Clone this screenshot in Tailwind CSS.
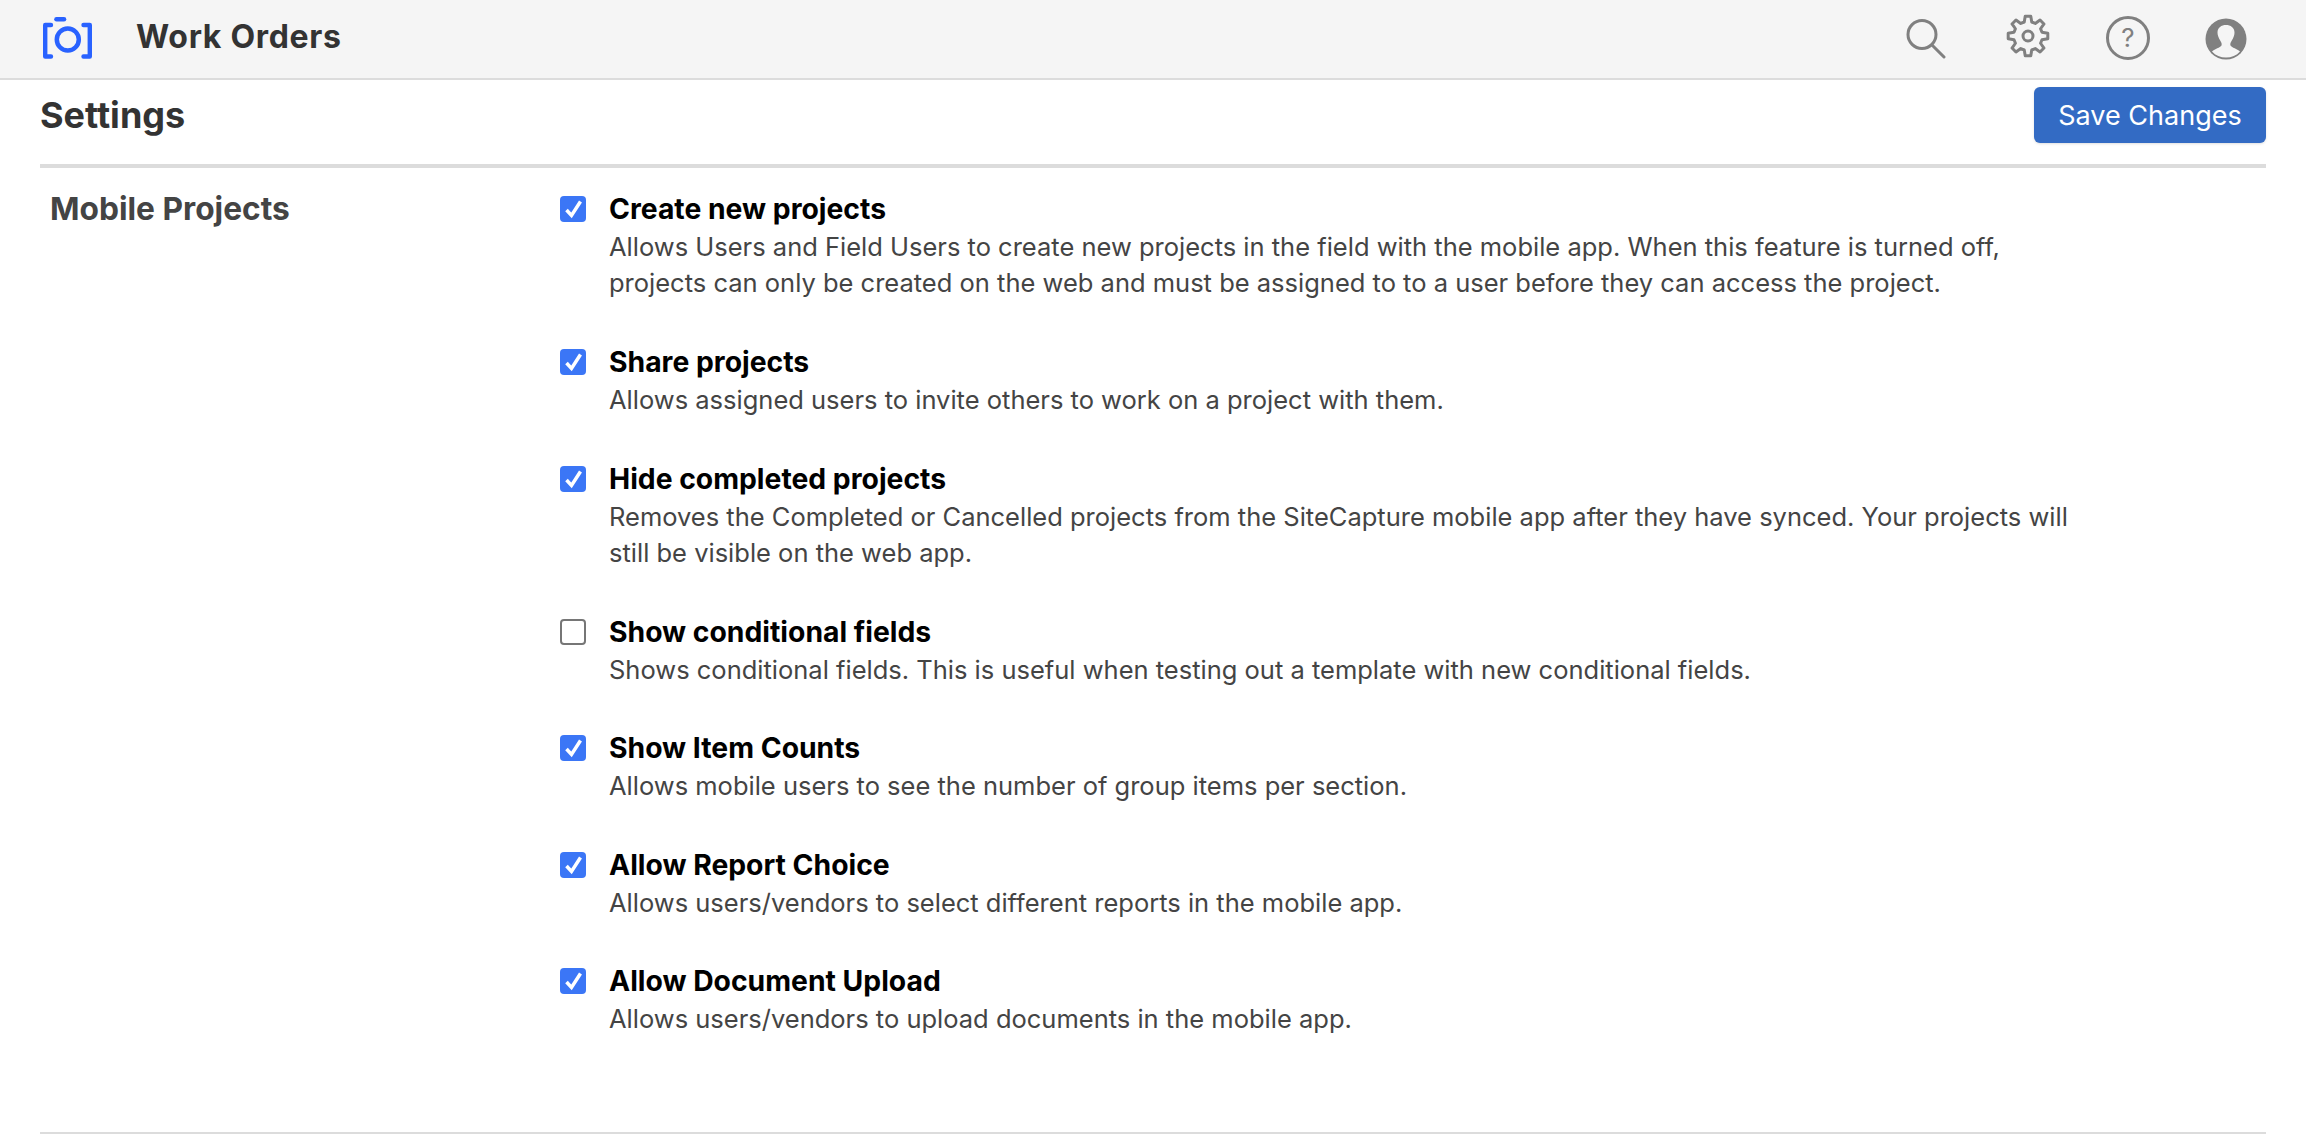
<!DOCTYPE html>
<html lang="en">
<head>
<meta charset="utf-8">
<title>Work Orders Settings</title>
<script src="https://cdn.jsdelivr.net/npm/@tailwindcss/browser@4"></script>
</head>
<body class="bg-white font-['Inter',sans-serif] overflow-hidden">
<div class="h-[1142px] w-[2306px] flex flex-col">
  <header class="h-[80px] shrink-0 bg-[#f5f5f5] border-b-2 border-[#dcdcdc] flex items-center pl-[42px] pr-[59px]">
    <svg class="w-[52px] h-[44px] self-start mt-[16px]" viewBox="0 0 52 44" fill="none">
      <path d="M9 9H3.200V40.500H9" stroke="#2962ff" stroke-width="4.400" stroke-linejoin="round" stroke-linecap="round"/>
      <path d="M41.500 9H47.800V40.500H41.500" stroke="#2962ff" stroke-width="4.400" stroke-linejoin="round" stroke-linecap="round"/>
      <path d="M14.500 3.300H22" stroke="#2962ff" stroke-width="4.600" stroke-linecap="round"/>
      <circle cx="25.800" cy="23.500" r="11" stroke="#2962ff" stroke-width="4.500"/>
    </svg>
    <div class="ml-[42px] mb-[4px] text-[32px] leading-[36px] font-bold text-[#333333] tracking-[0.7px]">Work Orders</div>
    <div class="ml-auto flex items-center">
      <svg class="w-[40px] h-[40px]" viewBox="0 0 40 40" fill="none" stroke="#808080" stroke-width="3" stroke-linecap="round">
        <circle cx="16" cy="15.500" r="14"/><path d="M26 26L38 38"/>
      </svg>
      <svg class="w-[44px] h-[44px] ml-[60px] -mt-[6px]" viewBox="0 0 44 44" fill="none" stroke="#808080" stroke-width="3" stroke-linejoin="round">
        <path d="M18.250 8L19.220 2.200H24.780L25.750 8L29.250 9.440L34.040 6.030L37.970 9.960L34.560 14.750L36 18.250L41.800 19.220V24.780L36 25.750L34.560 29.250L37.970 34.040L34.040 37.970L29.250 34.560L25.750 36L24.780 41.800H19.220L18.250 36L14.750 34.560L9.960 37.970L6.030 34.040L9.440 29.250L8 25.750L2.200 24.780V19.220L8 18.250L9.440 14.750L6.030 9.960L9.960 6.030L14.750 9.440Z"/>
        <circle cx="22" cy="22" r="5"/>
      </svg>
      <div class="w-[44px] h-[44px] ml-[56px] -mt-[2px] rounded-full border-[3px] border-[#808080] flex items-center justify-center text-[26px] leading-none text-[#808080] font-['Inter',sans-serif]">?</div>
      <svg class="w-[42px] h-[42px] ml-[55px]" viewBox="0 0 42 42">
        <circle cx="21" cy="21" r="20.500" fill="#808080"/>
        <path d="M7 33.500C10 30.500 15 30 16.500 27.500C17 26 16.500 24.500 15.500 23C13.500 20 12.500 17 12.500 14.500C12.500 9.500 16.500 7 21 7C25.500 7 29.500 9.500 29.500 14.500C29.500 17 28.500 20 26.500 23C25.500 24.500 25 26 25.500 27.500C27 30 32 30.500 35 33.500C31.500 37.500 26.500 39.500 21 39.500C15.500 39.500 10.500 37.500 7 33.500Z" fill="#f5f5f5"/>
      </svg>
    </div>
  </header>

  <main class="flex-1 flex flex-col px-[40px]">
    <div class="h-[88px] pb-[14px] shrink-0 border-b-[4px] border-[#dcdcdc] flex items-center justify-between">
      <h1 class="text-[36px] leading-[42px] font-bold text-[#333333]">Settings</h1>
      <button class="w-[232px] h-[56px] rounded-[6px] bg-[#336bc4] text-white text-[27px] leading-none shadow-sm">Save Changes</button>
    </div>
    <div class="flex-1 flex">
      <h2 class="w-[520px] shrink-0 pl-[10px] pt-[22px] text-[31.7px] leading-[38px] font-bold text-[#444444]">Mobile Projects</h2>
      <div class="w-[1530px] pt-[22px]">
        <div class="flex mb-[42px]">
          <span class="mt-[6px] w-[26px] h-[26px] shrink-0 rounded-[4px] bg-[#3b76f6]"><svg class="w-[26px] h-[26px]" viewBox="0 0 26 26" fill="none" stroke="#fff" stroke-width="3.500"><path d="M6.500 14L11.500 19.500L20.500 5.500"/></svg></span>
          <div class="ml-[23px]">
            <div class="text-[28.3px] leading-[39px] font-bold text-black">Create new projects</div>
            <p class="text-[25.5px] leading-[36px] text-[#444444]">Allows Users and Field Users to create new projects in the field with the mobile app. When this feature is turned off, projects can only be created on the web and must be assigned to to a user before they can access the project.</p>
          </div>
        </div>
        <div class="flex mb-[41.5px]">
          <span class="mt-[6px] w-[26px] h-[26px] shrink-0 rounded-[4px] bg-[#3b76f6]"><svg class="w-[26px] h-[26px]" viewBox="0 0 26 26" fill="none" stroke="#fff" stroke-width="3.500"><path d="M6.500 14L11.500 19.500L20.500 5.500"/></svg></span>
          <div class="ml-[23px]">
            <div class="text-[28.3px] leading-[39px] font-bold text-black">Share projects</div>
            <p class="text-[25.5px] leading-[36px] text-[#444444]">Allows assigned users to invite others to work on a project with them.</p>
          </div>
        </div>
        <div class="flex mb-[42px]">
          <span class="mt-[6px] w-[26px] h-[26px] shrink-0 rounded-[4px] bg-[#3b76f6]"><svg class="w-[26px] h-[26px]" viewBox="0 0 26 26" fill="none" stroke="#fff" stroke-width="3.500"><path d="M6.500 14L11.500 19.500L20.500 5.500"/></svg></span>
          <div class="ml-[23px]">
            <div class="text-[28.3px] leading-[39px] font-bold text-black">Hide completed projects</div>
            <p class="text-[25.5px] leading-[36px] text-[#444444]">Removes the Completed or Cancelled projects from the SiteCapture mobile app after they have synced. Your projects will still be visible on the web app.</p>
          </div>
        </div>
        <div class="flex mb-[41.5px]">
          <span class="mt-[6px] w-[26px] h-[26px] shrink-0 rounded-[4px] border-2 border-[#767676] bg-white"></span>
          <div class="ml-[23px]">
            <div class="text-[28.3px] leading-[39px] font-bold text-black">Show conditional fields</div>
            <p class="text-[25.5px] leading-[36px] text-[#444444]">Shows conditional fields. This is useful when testing out a template with new conditional fields.</p>
          </div>
        </div>
        <div class="flex mb-[41.5px]">
          <span class="mt-[6px] w-[26px] h-[26px] shrink-0 rounded-[4px] bg-[#3b76f6]"><svg class="w-[26px] h-[26px]" viewBox="0 0 26 26" fill="none" stroke="#fff" stroke-width="3.500"><path d="M6.500 14L11.500 19.500L20.500 5.500"/></svg></span>
          <div class="ml-[23px]">
            <div class="text-[28.3px] leading-[39px] font-bold text-black">Show Item Counts</div>
            <p class="text-[25.5px] leading-[36px] text-[#444444]">Allows mobile users to see the number of group items per section.</p>
          </div>
        </div>
        <div class="flex mb-[41.5px]">
          <span class="mt-[6px] w-[26px] h-[26px] shrink-0 rounded-[4px] bg-[#3b76f6]"><svg class="w-[26px] h-[26px]" viewBox="0 0 26 26" fill="none" stroke="#fff" stroke-width="3.500"><path d="M6.500 14L11.500 19.500L20.500 5.500"/></svg></span>
          <div class="ml-[23px]">
            <div class="text-[28.3px] leading-[39px] font-bold text-black">Allow Report Choice</div>
            <p class="text-[25.5px] leading-[36px] text-[#444444]">Allows users/vendors to select different reports in the mobile app.</p>
          </div>
        </div>
        <div class="flex">
          <span class="mt-[6px] w-[26px] h-[26px] shrink-0 rounded-[4px] bg-[#3b76f6]"><svg class="w-[26px] h-[26px]" viewBox="0 0 26 26" fill="none" stroke="#fff" stroke-width="3.500"><path d="M6.500 14L11.500 19.500L20.500 5.500"/></svg></span>
          <div class="ml-[23px]">
            <div class="text-[28.3px] leading-[39px] font-bold text-black">Allow Document Upload</div>
            <p class="text-[25.5px] leading-[36px] text-[#444444]">Allows users/vendors to upload documents in the mobile app.</p>
          </div>
        </div>
      </div>
    </div>
    <div class="h-[2px] shrink-0 bg-[#dcdcdc] mb-[8px]"></div>
  </main>
</div>
</body>
</html>
